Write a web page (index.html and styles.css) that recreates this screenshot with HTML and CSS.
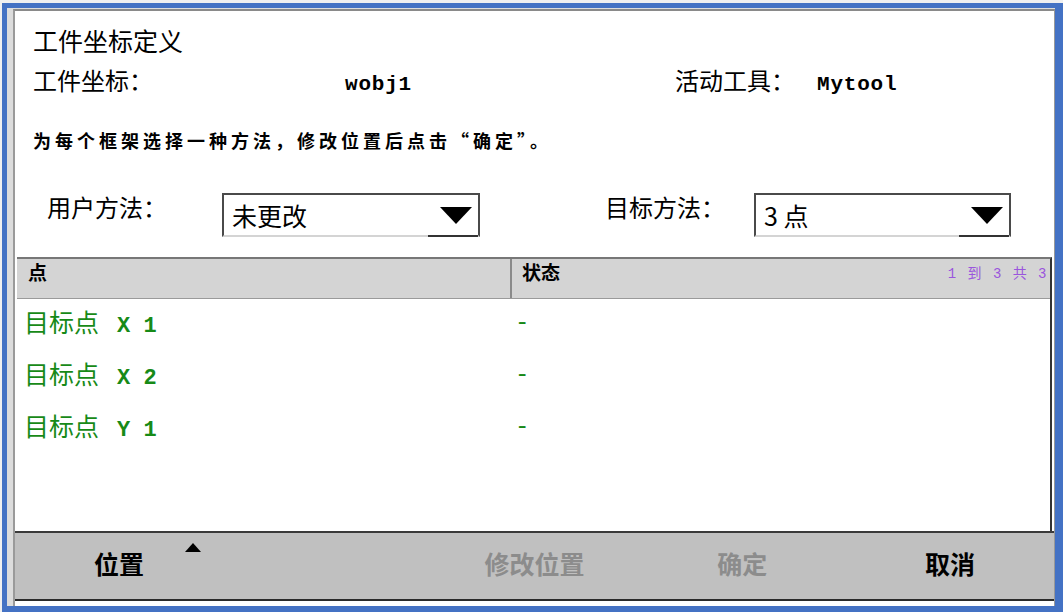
FILE: index.html
```html
<!DOCTYPE html>
<html lang="zh-CN">
<head>
    <meta charset="UTF-8">
    <meta name="viewport" content="width=device-width, initial-scale=1.0">
    <title>工件坐标定义</title>
    <link rel="stylesheet" href="styles.css">
</head>
<body>

    <div class="frame">
        <div class="desk">
            <div class="dialog">

                <div class="info">
                    <h1 class="title">工件坐标定义</h1>

                    <div class="current">
                        <span class="label wobj-label">工件坐标：</span>
                        <span class="value wobj-value">wobj1</span>
                        <span class="label tool-label">活动工具：</span>
                        <span class="value">Mytool</span>
                    </div>

                    <p class="hint">为每个框架选择一种方法，修改位置后点击“确定”。</p>

                    <div class="methods">
                        <div class="method">
                            <span class="label user-label">用户方法：</span>
                            <div class="select user-select">
                                <span>未更改</span>
                                <span class="arrow">
                                    <svg width="32" height="17" viewBox="0 0 32 17"><polygon points="0,0 32,0 16,17" fill="#000"/></svg>
                                </span>
                            </div>
                        </div>
                        <div class="method">
                            <span class="label target-label">目标方法：</span>
                            <div class="select target-select">
                                <span>3 点</span>
                                <span class="arrow">
                                    <svg width="32" height="17" viewBox="0 0 32 17"><polygon points="0,0 32,0 16,17" fill="#000"/></svg>
                                </span>
                            </div>
                        </div>
                    </div>
                </div>

                <div class="table">
                    <div class="thead">
                        <div class="th col-point">点</div>
                        <div class="th col-state">
                            <span>状态</span>
                            <span class="count">1 到 3 共 3</span>
                        </div>
                    </div>
                    <div class="row">
                        <div class="cell-point">目标点<b>X 1</b></div>
                        <div class="cell-state">-</div>
                    </div>
                    <div class="row">
                        <div class="cell-point">目标点<b>X 2</b></div>
                        <div class="cell-state">-</div>
                    </div>
                    <div class="row">
                        <div class="cell-point">目标点<b>Y 1</b></div>
                        <div class="cell-state">-</div>
                    </div>
                </div>

                <div class="toolbar">
                    <div class="tool-btn menu-btn">
                        位置
                        <svg class="menu-mark" width="16" height="9" viewBox="0 0 16 9"><polygon points="8,0 16,9 0,9" fill="#000"/></svg>
                    </div>
                    <div class="tool-btn"></div>
                    <div class="tool-btn disabled">修改位置</div>
                    <div class="tool-btn disabled">确定</div>
                    <div class="tool-btn">取消</div>
                </div>

            </div>
        </div>
    </div>

</body>
</html>
```

FILE: styles.css
```css
/* General */
* {
    box-sizing: border-box;
}

body {
    margin: 0;
    background: #f0f0f0;
    font-family: "Noto Sans CJK SC", sans-serif;
    color: #000;
}

/* Window frame around the dialog */
.frame {
    margin: 3px 0 0 2px;
    width: 1061px;
    height: 609px;
    border-style: solid;
    border-color: #4472c4;
    border-width: 5px 8px 6px 5px;
}

.desk {
    height: 100%;
    background: #dcdcdc;
    padding: 1px 0 0 6px;
}

.dialog {
    height: 100%;
    background: #fff;
    border-top: 2px solid #8a8a8a;
    border-left: 2px solid #9a9a9a;
    border-right: 1px solid #999;
}

/* Header info */
.info {
    height: 246px;
    padding: 9px 0 0 18px;
}

.title {
    margin: 0;
    font-size: 25px;
    font-weight: normal;
    line-height: 40px;
}

.current {
    display: flex;
    align-items: baseline;
    height: 40px;
    line-height: 40px;
    font-size: 24px;
}

.wobj-label {
    width: 312px;
}

.wobj-value {
    width: 330px;
}

.tool-label {
    width: 142px;
}

.value {
    font-family: "Liberation Mono", monospace;
    font-weight: bold;
    font-size: 21px;
    letter-spacing: 0.8px;
}

.hint {
    margin: 20px 0 0 0;
    line-height: 40px;
    font-size: 18px;
    font-weight: bold;
    letter-spacing: 4px;
}

/* Method pickers */
.methods {
    display: grid;
    grid-template-columns: 558px auto;
    margin: 33px 0 0 14px;
    height: 44px;
    font-size: 24px;
}

.method {
    display: flex;
    align-items: center;
}

.method .label {
    margin-top: -18px;
}

.user-label {
    width: 175px;
}

.target-label {
    width: 149px;
}

.select {
    height: 44px;
    display: flex;
    align-items: center;
    justify-content: space-between;
    padding-left: 8px;
    border: 2px solid #4a4a4a;
    border-bottom-color: #d4d4d4;
    font-size: 25px;
}

.user-select {
    width: 258px;
}

.target-select {
    width: 257px;
}

.arrow {
    align-self: stretch;
    width: 50px;
    display: flex;
    align-items: center;
    justify-content: flex-end;
    padding: 0 6px 0 0;
    margin-bottom: -2px;
    border-bottom: 2px solid #333;
}

/* Point table */
.table {
    height: 274px;
    margin: 0 2px;
    border-top: 2px solid #777;
    border-right: 2px solid #333;
}

.thead,
.row {
    display: grid;
    grid-template-columns: 495px 1fr;
}

.thead {
    height: 40px;
    background: #d4d4d4;
    border-bottom: 1px solid #9a9a9a;
}

.th {
    font-size: 19px;
    font-weight: bold;
    line-height: 26px;
}

.col-point {
    padding-left: 11px;
    border-right: 2px solid #8a8a8a;
}

.col-state {
    display: flex;
    justify-content: space-between;
    padding: 0 2px 0 10px;
}

.count {
    font-family: "Liberation Mono", "Noto Sans CJK SC", monospace;
    font-weight: normal;
    font-size: 14px;
    line-height: 30px;
    letter-spacing: 1.5px;
    color: #9a55dd;
}

.row {
    height: 52px;
    align-items: center;
    padding-bottom: 8px;
    color: #178a17;
    font-size: 25px;
}

.cell-point {
    padding-left: 7px;
}

.cell-point b {
    margin-left: 18px;
    font-family: "Liberation Mono", monospace;
    font-size: 22px;
}

.cell-state {
    padding: 3px 0 0 3px;
    font-family: "Liberation Mono", monospace;
    font-size: 24px;
}

/* Command bar */
.toolbar {
    height: 70px;
    display: grid;
    grid-template-columns: repeat(5, 1fr);
    align-items: start;
    background: #c0c0c0;
    border-top: 2px solid #3a3a3a;
    border-bottom: 2px solid #2a2a2a;
    text-align: center;
    font-size: 25px;
    font-weight: bold;
}

.tool-btn {
    position: relative;
    line-height: 60px;
}

.tool-btn.disabled {
    color: #8c8c8c;
}

.menu-mark {
    position: absolute;
    left: 170px;
    top: 10px;
}
```
